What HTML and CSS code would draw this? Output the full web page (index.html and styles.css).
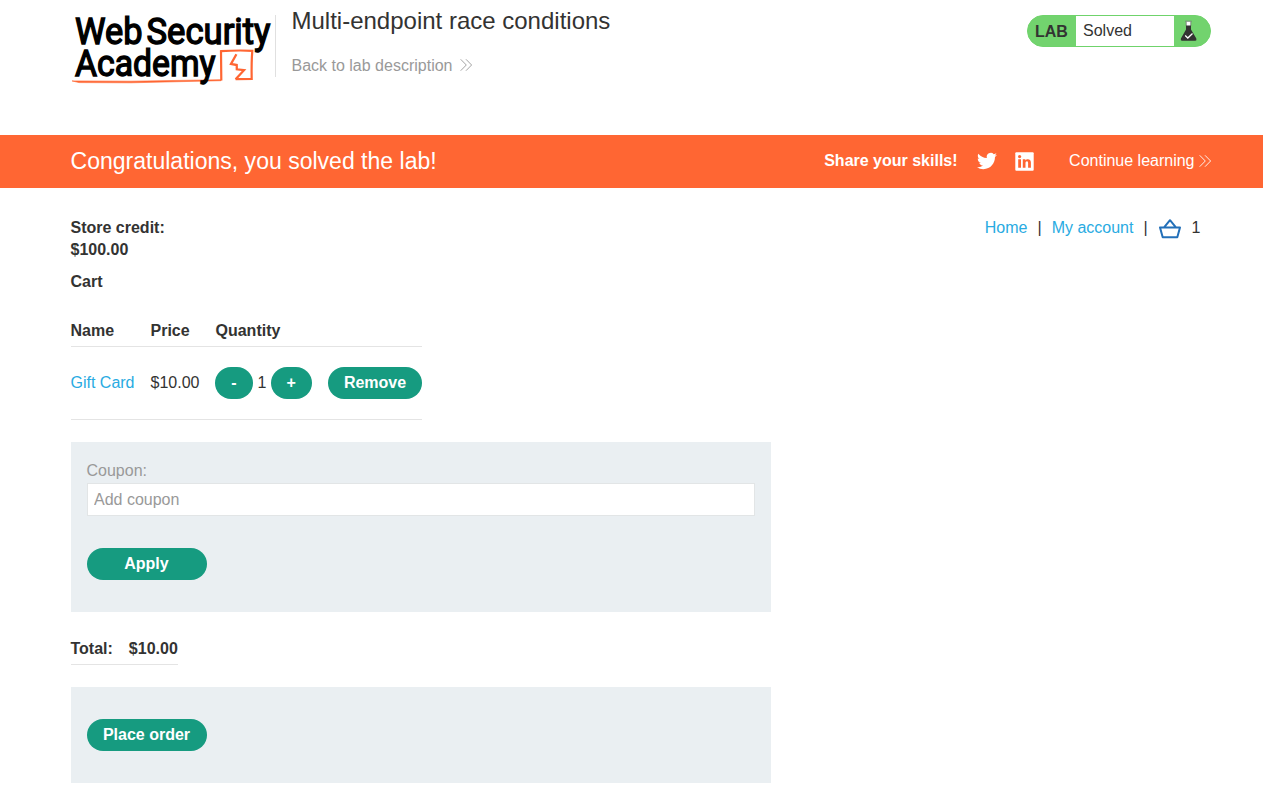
FILE: index.html
```html
<!DOCTYPE html>
<html lang="en">
<head>
<meta charset="utf-8">
<title>Multi-endpoint race conditions</title>
<link rel="stylesheet" href="styles.css">
</head>
<body>
<header class="lab-header">
  <svg class="logo" width="205" height="86" viewBox="0 0 205 86" role="img" aria-label="Web Security Academy">
    <g class="logo-mark">
      <path d="M1 80.900L60 81.200 150 79.700 150 80.700 60 82.800 8 82.600Z" fill="#ff6633" stroke="#ff6633" stroke-width=".6"/>
      <path d="M150.300 80.500 150 51.200C160 50.500 171 50.300 181.300 50.800C180.500 60 180.500 69 180.700 79L164.600 79.200" fill="none" stroke="#ff6633" stroke-width="2.200"/>
      <path d="M165.400 54.200 160 64 165.700 65 165.800 69.300 173 70.200 164.600 79.200" fill="none" stroke="#ff6633" stroke-width="2.300"/>
    </g>
    <g class="logo-text">
      <text x="4" y="43.500" textLength="67.500" lengthAdjust="spacingAndGlyphs">Web</text>
      <text x="75.500" y="43.500" textLength="124" lengthAdjust="spacingAndGlyphs">Security</text>
      <text x="4" y="76" textLength="140.500" lengthAdjust="spacingAndGlyphs">Academy</text>
    </g>
  </svg>
  <div class="title-block">
    <h2>Multi-endpoint race conditions</h2>
    <a class="back-link">Back to lab description
      <svg width="12" height="12" viewBox="0 0 12 12"><path d="M.7.3 6.300 6 .7 11.700M6 .3 11.600 6 6 11.700"/></svg>
    </a>
  </div>
  <div class="lab-status">
    <span class="lab-label">LAB</span>
    <span class="lab-state">Solved</span>
    <span class="lab-flask">
      <svg width="18" height="22" viewBox="0 0 18 22">
        <path d="M6.200 1.500V6H10.800V1.500" fill="#fff"/>
        <path d="M5.200 1.200H11.800M6.200 1.500V6M10.800 1.500V6" stroke="#777" stroke-width=".8" fill="none"/>
        <path d="M6 5.500H11V9.500L16.300 18.500Q17 20.800 15.300 20.800H2Q.2 20.800 .9 18.500L6 9.500Z" fill="#333332"/>
        <path d="M5.200 15.500 7.800 18 12.500 13.500" stroke="#fff" stroke-width="1.300" fill="none"/>
      </svg>
    </span>
  </div>
</header>
<section class="solved-banner">
  <h4>Congratulations, you solved the lab!</h4>
  <div class="share">
    <span class="share-label">Share your skills!</span>
    <svg class="twitter" width="20" height="20" viewBox="0 0 24 24"><path fill="#fff" d="M23.950 4.570a10 10 0 0 1-2.820.770 4.960 4.960 0 0 0 2.160-2.720c-.95.550-2 .95-3.130 1.180a4.920 4.920 0 0 0-8.380 4.480C7.690 8.090 4.070 6.130 1.640 3.160a4.820 4.820 0 0 0-.67 2.480c0 1.710.87 3.210 2.190 4.100a4.900 4.900 0 0 1-2.230-.62v.06a4.920 4.920 0 0 0 3.950 4.830 5 5 0 0 1-2.210.08 4.940 4.940 0 0 0 4.600 3.420A9.870 9.870 0 0 1 0 19.540a14 14 0 0 0 7.550 2.210c9.050 0 14-7.500 14-13.980 0-.21 0-.42-.02-.63a9.940 9.940 0 0 0 2.420-2.570z"/></svg>
    <svg class="linkedin" width="19" height="19" viewBox="0 0 19 19"><rect x=".3" y=".3" width="18.400" height="18.400" rx="1" fill="#fff"/><g fill="#ff6633"><circle cx="4.600" cy="4.600" r="1.600"/><path d="M3.200 7.200H6V15.800H3.200ZM7.800 7.200H10.400V8.400C11.300 6.700 15.900 6.100 15.900 10.600V15.800H13.100V11.200C13.100 8.500 10.500 8.900 10.500 11.200V15.800H7.800Z"/></g></svg>
    <a class="continue">Continue learning<svg width="12" height="12" viewBox="0 0 12 12"><path d="M.7.3 6.300 6 .7 11.700M6 .3 11.600 6 6 11.700"/></svg></a>
  </div>
</section>
<main class="page">
  <div class="top-row">
    <div class="credit">Store credit:<br>$100.00</div>
    <nav class="top-links">
      <a>Home</a><span>|</span><a>My account</a><span>|</span>
      <svg width="24" height="20" viewBox="0 0 24 20"><path d="M2 8.500H22L19.300 18.300H4.700ZM6.300 8.200 12 1.200 17.700 8.200" fill="none" stroke="#2370b9" stroke-width="2" stroke-linejoin="round"/></svg>
      <b>1</b>
    </nav>
  </div>
  <h1>Cart</h1>
  <div class="cart">
    <div class="cart-row cart-head"><span>Name</span><span>Price</span><span>Quantity</span></div>
    <div class="cart-row cart-item">
      <a>Gift Card</a><span>$10.00</span>
      <div class="quantity"><button class="minus">-</button><span>1</span><button class="plus">+</button></div>
      <button class="remove">Remove</button>
    </div>
  </div>
  <form class="panel coupon">
    <label for="coupon">Coupon:</label>
    <input id="coupon" type="text" placeholder="Add coupon">
    <button type="button" class="wide">Apply</button>
  </form>
  <div class="total"><span>Total:</span><span>$10.00</span></div>
  <div class="panel order"><button class="wide">Place order</button></div>
</main>
</body>
</html>
```
FILE: styles.css
```css
* { box-sizing: border-box; }
body { margin: 0; background: #fff; color: #333332; font: 16px/22px "Liberation Sans", Arial, sans-serif; overflow: hidden; }
h1, h2, h4 { margin: 0; }
a { color: #29abe2; }
svg { flex: none; }
.lab-header { height: 135px; padding: 0 52px 0 70.5px; display: flex; align-items: flex-start; }
.logo { overflow: visible; }
.logo-text { font: 400 37px Roboto, sans-serif; fill: #000; stroke: #000; stroke-width: 1.4px; }
.title-block { margin-top: 5px; padding-left: 16px; position: relative; flex: 1; }
.title-block::before { content: ""; position: absolute; left: -.5px; top: 10px; height: 62px; border-left: 1px solid #e0e0e0; }
.title-block h2 { font-size: 24px; line-height: 32px; font-weight: 400; }
.back-link { display: flex; align-items: center; gap: 8px; margin-top: 18px; color: #999; }
.back-link svg { margin-bottom: 2px; }
.back-link path { fill: none; stroke: #999; stroke-width: .9; }
.lab-status { width: 184px; height: 32px; margin-top: 15px; display: flex; align-items: stretch; border: 1px solid #6fd36b; border-radius: 16px; background: #72d36e; overflow: hidden; line-height: 30px; }
.lab-label { width: 48px; padding-left: 7px; font-weight: 700; line-height: 32px; }
.lab-state { width: 98px; padding-left: 7px; background: #fff; }
.lab-flask { padding: 4px 0 0 5.5px; line-height: 0; }
.solved-banner { height: 53px; background: #ff6633; color: #fff; padding: 0 52.5px 0 70.5px; display: flex; align-items: center; justify-content: space-between; }
.solved-banner h4 { font-size: 23.04px; line-height: 26px; font-weight: 400; padding-bottom: 2px; }
.share { display: flex; align-items: center; height: 51px; padding-bottom: 2px; }
.share-label { font-weight: 700; }
.twitter { margin: 1px 0 0 19px; }
.linkedin { margin: 2px 0 0 18.5px; }
.continue { margin-left: 35px; color: #fff; display: flex; align-items: center; gap: 4px; }
.continue path { fill: none; stroke: #fff; stroke-width: .9; }
.page { padding: 29px 52px 0 70.5px; }
.top-row { display: flex; justify-content: space-between; align-items: flex-start; }
.credit { font-weight: 700; }
.top-links { display: flex; align-items: center; gap: 10px; height: 22px; margin-right: 10.5px; }
.top-links b { font-weight: 400; }
.top-links svg { margin-top: 2px; }
h1 { font-size: 16px; line-height: 22px; margin-top: 10px; }
.cart { width: 351.5px; margin-top: 23px; }
.cart-row { display: grid; grid-template-columns: 80px 65px 97px auto; column-gap: 0; align-items: center; border-bottom: 1px solid #e4e4e4; }
.cart-head { height: 31px; padding-bottom: 1px; font-weight: 700; }
.cart-item { height: 73px; grid-template-columns: 80px 64.5px 113px 94px; }
.quantity { display: flex; align-items: center; gap: 4.450px; }
button { height: 32px; border: 0; border-radius: 16px; padding: 0; background: #169b80; color: #fff; font: 700 16px/32px "Liberation Sans", Arial, sans-serif; }
.minus { width: 38px; }
.plus { width: 41px; }
.panel { width: 700px; background: #eaeff2; padding: 32px 16px; }
.coupon { height: 170px; margin-top: 22px; padding-top: 18px; }
.coupon label { display: block; color: #999; }
.coupon input { display: block; width: 668px; height: 33px; margin: 1px 0 32px; padding: 0 6.5px; border: 1px solid #e2e5e6; background: #fff; font: 16px "Liberation Sans", Arial, sans-serif; outline: 0; }
.coupon input::placeholder { color: #999; opacity: 1; }
.wide { width: 120px; display: block; }
.total { display: flex; gap: 16px; width: 107.5px; height: 27px; margin-top: 26px; border-bottom: 1px solid #e4e4e4; font-weight: 700; white-space: nowrap; }
.order { height: 96px; margin-top: 22px; }
```
